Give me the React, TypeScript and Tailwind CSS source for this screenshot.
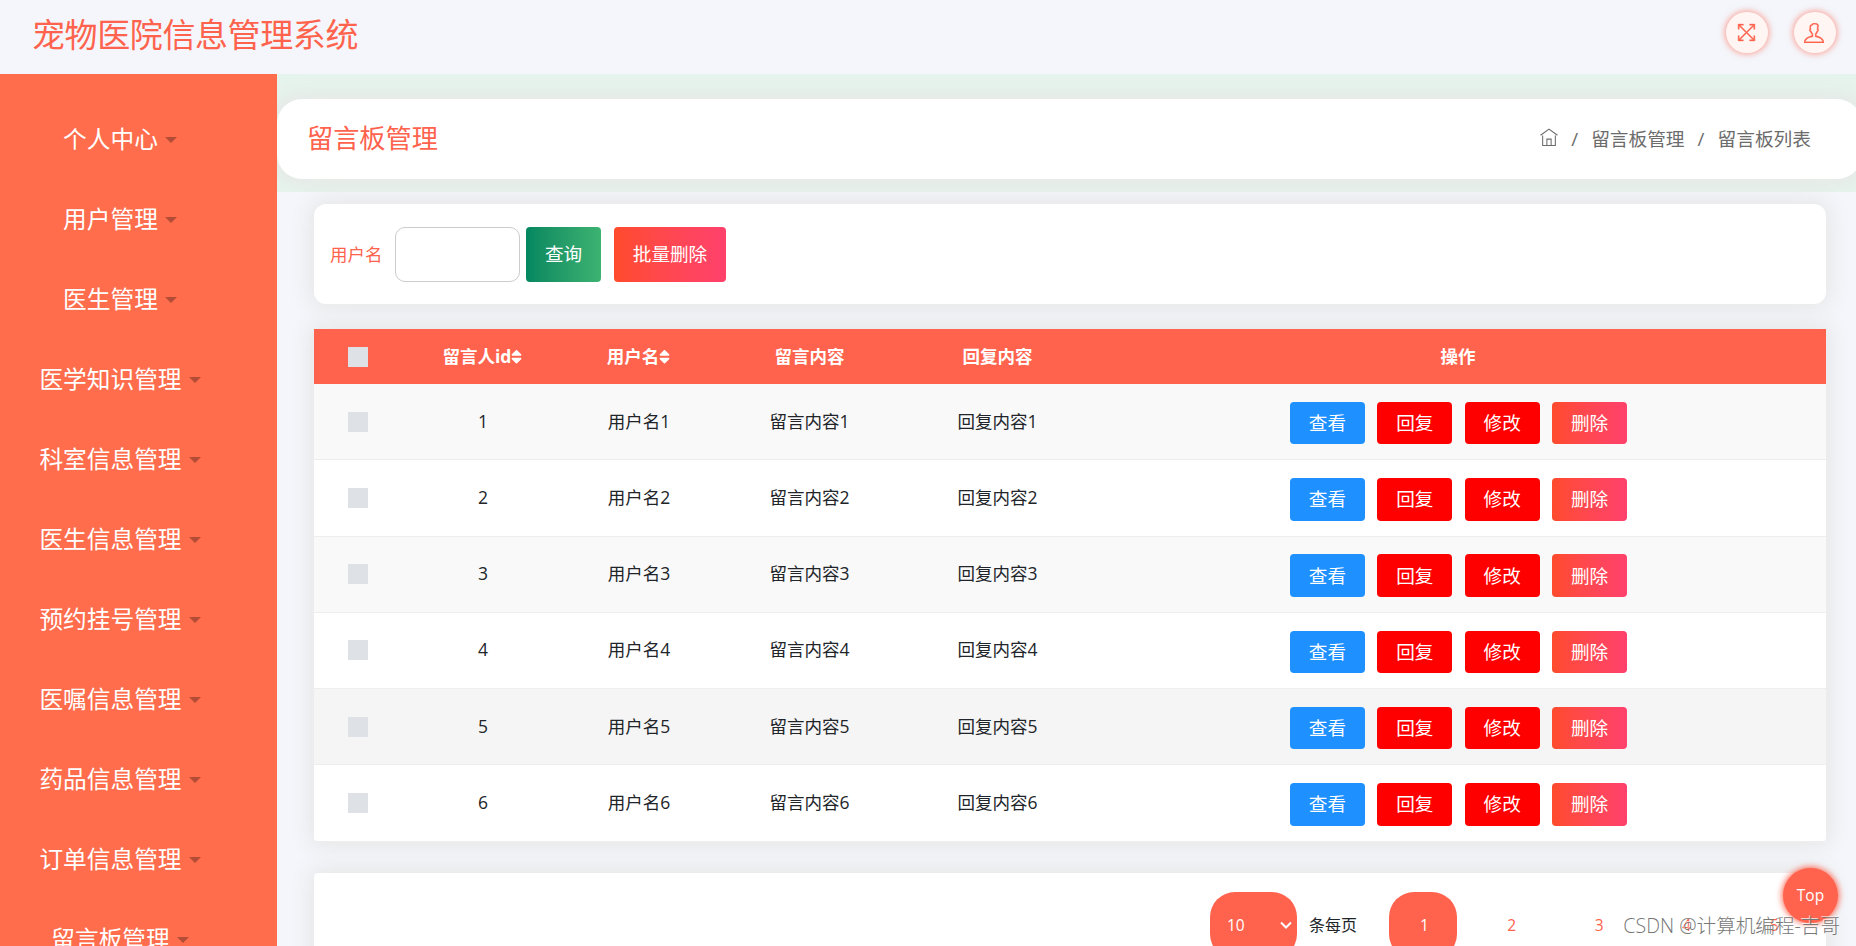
import { FaSort } from 'react-icons/fa';
import { TfiFullscreen, TfiHome, TfiUser } from 'react-icons/tfi';

const menus = [
  '个人中心',
  '用户管理',
  '医生管理',
  '医学知识管理',
  '科室信息管理',
  '医生信息管理',
  '预约挂号管理',
  '医嘱信息管理',
  '药品信息管理',
  '订单信息管理',
  '留言板管理',
];

const messages = [1, 2, 3, 4, 5, 6].map(id => ({
  id,
  user: `用户名${id}`,
  content: `留言内容${id}`,
  reply: `回复内容${id}`,
}));

const actions = [
  { label: '查看', color: 'bg-[#1e90ff]' },
  { label: '回复', color: 'bg-[#ff0000]' },
  { label: '修改', color: 'bg-[#ff0000]' },
  { label: '删除', color: 'bg-linear-to-r from-[#ff4b2b] to-[#ff416c]' },
];

const columns = 'grid grid-cols-[88px_162px_150px_191px_185px_736px] items-center justify-items-center';

function Checkbox() {
  return <span className="block h-5 w-5 bg-[#dee2e6]" />;
}

function RoundButton({ children }: { children: React.ReactNode }) {
  return (
    <button className="flex h-[41px] w-[42px] items-center justify-center rounded-full bg-[#fff6f4] pr-0.5 text-[20px] text-[#ff634d] shadow-[0_0_6px_1px_#ff634d99]">
      {children}
    </button>
  );
}

export default function App() {
  return (
    <div className="relative h-[946px] w-[1856px] overflow-hidden bg-[#f4f6fb] font-['Open_Sans','Noto_Sans_CJK_SC',sans-serif] text-[#212529]">
      {/* Header */}
      <header className="flex h-[74px] items-start justify-between pl-8 pr-5">
        <h1 className="pt-[11px] text-[33px] leading-[48px] tracking-[-0.4px] text-[#ff634d]">宠物医院信息管理系统</h1>
        <div className="flex gap-[26px] pt-3">
          <RoundButton><TfiFullscreen className="h-[19px] w-[19px] stroke-[#ff634d] [stroke-width:0.4]" /></RoundButton>
          <RoundButton><TfiUser className="stroke-[#ff634d] [stroke-width:0.3]" /></RoundButton>
        </div>
      </header>

      <div className="flex h-[872px]">
        {/* Sidebar */}
        <nav className="relative z-10 w-[277px] shrink-0 overflow-hidden bg-[#ff6d4d] pt-[26px]">
          {menus.map(menu => (
            <a key={menu} className="flex h-20 w-60 items-center justify-center gap-[7px] text-[23.7px] text-white">
              {menu}
              <span className="border-x-[6px] border-t-[6px] border-x-transparent border-t-[#b34d37]" />
            </a>
          ))}
        </nav>

        <main className="w-[1585px] shrink-0">
          {/* Breadcrumb */}
          <div className="h-[118px] overflow-hidden bg-[#e5f4ec] pt-[25px]">
            <div className="flex h-20 items-center justify-between rounded-[25px] bg-white pl-[30px] pr-[51px] shadow-[0_0_20px_5px_#e7e7e7]">
              <h2 className="text-[26.2px] text-[#ff634d]">留言板管理</h2>
              <div className="flex items-center text-[18.7px] text-[#6c6c6c]">
                <TfiHome className="mb-1 mr-[13px] text-[18px]" />
                <span className="mr-3 w-2">/</span>
                <span className="mr-[13px]">留言板管理</span>
                <span className="mr-3 w-2">/</span>
                <span>留言板列表</span>
              </div>
            </div>
          </div>

          <div className="ml-[37px] w-[1512px]">
            {/* Search */}
            <div className="mt-3 flex h-[100px] items-start rounded-[12px] bg-white pl-4 pt-[23px] shadow-[0_0_20px_5px_#e7e7e7]">
              <label className="mr-3 w-[53px] whitespace-nowrap text-[17.5px] leading-[54px] text-[#ff634d]">用户名</label>
              <input className="mr-1.5 h-[55px] w-[125px] rounded-[10px] border border-[#cccccc] bg-white" />
              <button className="mr-[13px] h-[55px] w-[75px] rounded-[4px] bg-linear-to-r from-[#028760] to-[#3cb371] pb-0.5 text-[18.6px] text-white">查询</button>
              <button className="h-[55px] w-28 rounded-[4px] bg-linear-to-r from-[#ff4b2b] to-[#ff416c] pb-0.5 text-[18.6px] text-white">批量删除</button>
            </div>

            {/* Message table */}
            <div className="mt-[25px] rounded-b-[4px] bg-white shadow-[0_0_20px_5px_#e7e7e7]">
              <div className={`${columns} h-[55px] bg-[#ff634d] text-[17.5px] font-bold text-white`}>
                <Checkbox />
                <span className="flex items-center pl-0.5">留言人id<FaSort className="-ml-[3px] w-[17px]" /></span>
                <span className="flex items-center pl-0.5">用户名<FaSort className="-ml-[3px] w-[17px]" /></span>
                <span>留言内容</span>
                <span>回复内容</span>
                <span>操作</span>
              </div>
              {messages.map(message => (
                <div key={message.id} className={`${columns} h-[76.25px] border-b border-[#eeeeee] text-[17.5px] last:rounded-b-[4px] odd:bg-white even:bg-[#f9f9f9] nth-6:bg-[#f5f5f5]`}>
                  <Checkbox />
                  <span className="pb-0.5">{message.id}</span>
                  <span className="pb-0.5">{message.user}</span>
                  <span className="pb-0.5">{message.content}</span>
                  <span className="pb-0.5">{message.reply}</span>
                  <span className="flex gap-[12.4px] pl-px pt-[3px]">
                    {actions.map(action => (
                      <button key={action.label} className={`${action.color} h-[42.5px] w-[75px] rounded-[4px] text-[18.6px] text-white`}>
                        {action.label}
                      </button>
                    ))}
                  </span>
                </div>
              ))}
            </div>

            {/* Pagination */}
            <div className="mt-[31px] flex h-[120px] rounded-[4px] bg-white pl-[896px] pt-[19px] text-[15.5px] leading-[67px] shadow-[0_0_20px_5px_#e7e7e7]">
              <div className="flex h-[67px] w-[87px] items-center justify-between rounded-[25px] bg-[#ff634d] pl-[17px] pr-1 text-white">
                10
                <svg width="14" height="14" viewBox="0 0 14 14" fill="none" stroke="currentColor" strokeWidth="2">
                  <path d="M2 4.5l5 5 5-5" />
                </svg>
              </div>
              <span className="ml-3 mr-8 w-12 text-[16px]">条每页</span>
              <span className="h-[67px] w-[68px] rounded-[25px] bg-[#ff634d] pl-[3px] text-center text-white">1</span>
              <div className="ml-[11px] flex text-[#ff634d]">
                {[2, 3, 4, 5].map(page => (
                  <span key={page} className="w-[87.5px] text-center">{page}</span>
                ))}
              </div>
            </div>
          </div>
        </main>
      </div>

      <button className="absolute top-[868px] left-[1783px] z-20 h-[55px] w-[55px] rounded-full bg-[#ff634d] text-[15.5px] text-white shadow-[0_0_6px_1px_#ff634d]">
        Top
      </button>
      <span className="absolute top-[911px] right-4 z-30 text-[19.6px] leading-[30px] font-light whitespace-nowrap text-[#777777] [text-shadow:-1px_-1px_0_#ffffffb0]">
        CSDN @计算机编程-吉哥
      </span>
    </div>
  );
}
